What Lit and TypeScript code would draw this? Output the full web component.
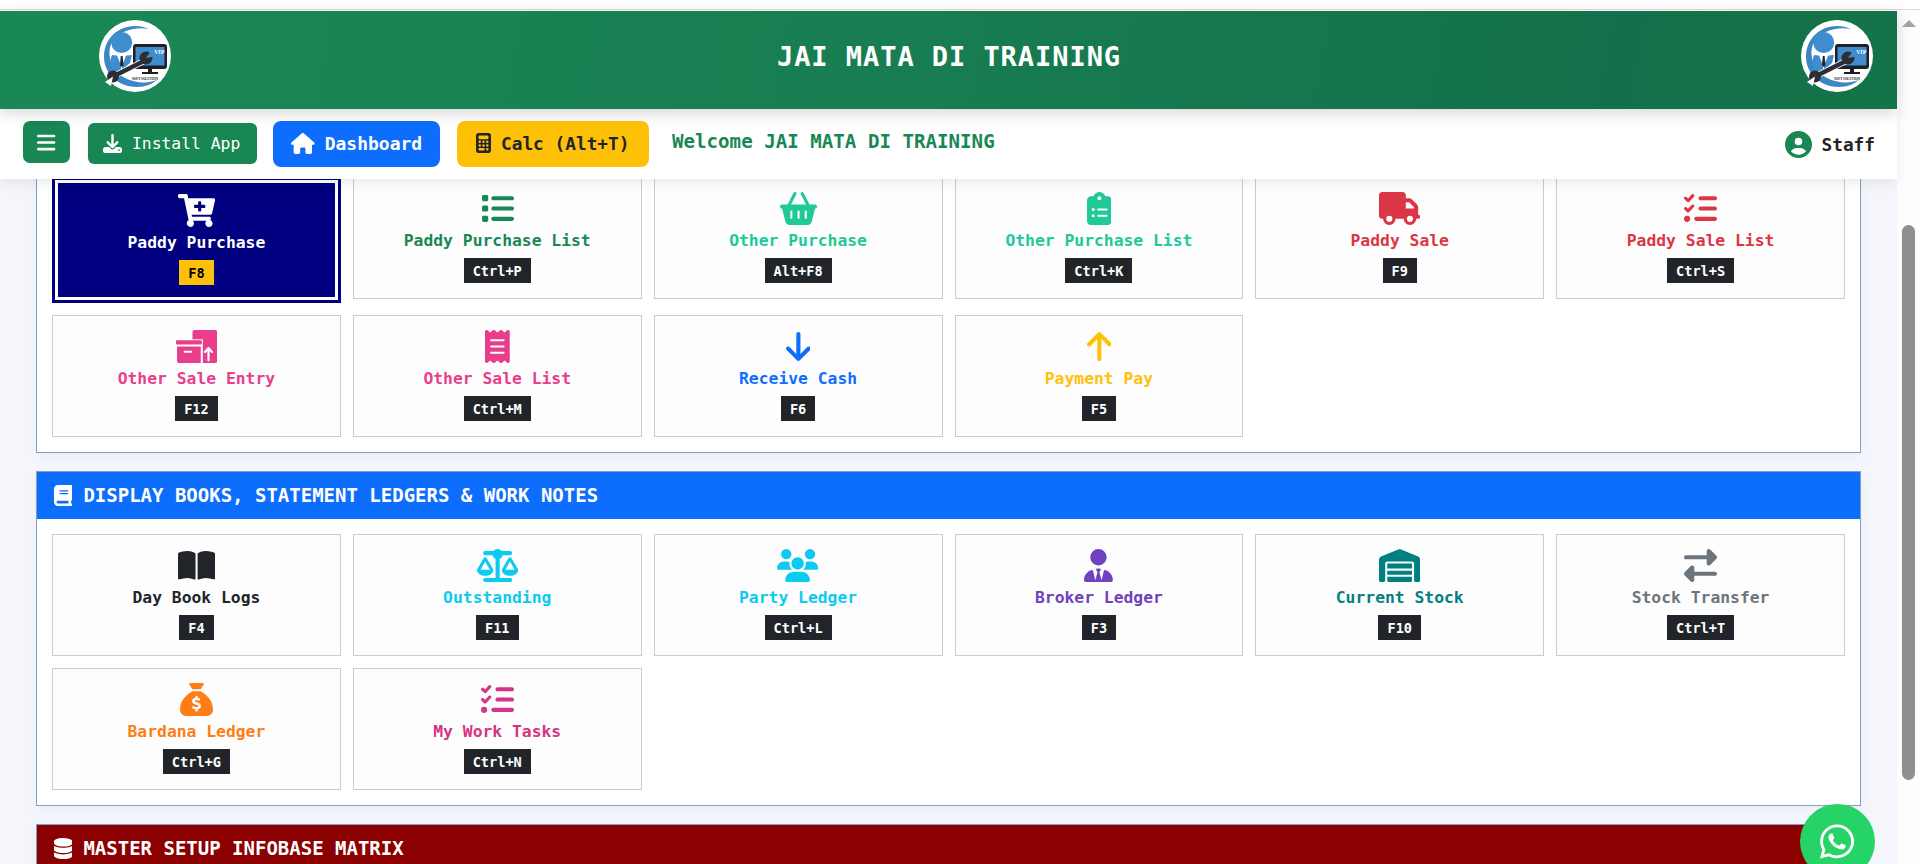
import { LitElement, html, css, svg } from "lit";
import { customElement } from "lit/decorators.js";

type Ic = { w: number; h?: number; d?: string; extra?: unknown };
const I: Record<string, Ic> = {
  bars: { w: 448, d: "M0 96C0 78.3 14.3 64 32 64H416c17.7 0 32 14.3 32 32s-14.3 32-32 32H32C14.3 128 0 113.7 0 96zM0 256c0-17.7 14.3-32 32-32H416c17.7 0 32 14.3 32 32s-14.3 32-32 32H32c-17.7 0-32-14.3-32-32zM448 416c0 17.7-14.3 32-32 32H32c-17.7 0-32-14.3-32-32s14.3-32 32-32H416c17.7 0 32 14.3 32 32z" },
  download: { w: 512, d: "M288 32c0-17.7-14.3-32-32-32s-32 14.3-32 32V274.7l-73.4-73.4c-12.5-12.5-32.8-12.5-45.3 0s-12.5 32.8 0 45.3l128 128c12.5 12.5 32.8 12.5 45.3 0l128-128c12.5-12.5 12.5-32.8 0-45.3s-32.8-12.5-45.3 0L288 274.7V32zM64 352c-35.3 0-64 28.7-64 64v32c0 35.3 28.7 64 64 64H448c35.3 0 64-28.7 64-64V416c0-35.3-28.7-64-64-64H346.5l-45.3 45.3c-25 25-65.5 25-90.5 0L165.5 352H64zm368 56a24 24 0 1 1 0 48 24 24 0 1 1 0-48z" },
  house: { w: 576, d: "M575.8 255.5c0 18-15 32.1-32 32.1h-32l.7 160.2c0 2.7-.2 5.4-.5 8.1V472c0 22.1-17.9 40-40 40H456c-1.1 0-2.2 0-3.3-.1c-1.4 .1-2.8 .1-4.2 .1H416 392c-22.1 0-40-17.9-40-40V448 384c0-17.7-14.3-32-32-32H256c-17.7 0-32 14.3-32 32v64 24c0 22.1-17.9 40-40 40H160 128.1c-1.5 0-3-.1-4.5-.2c-1.2 .1-2.4 .2-3.6 .2H104c-22.1 0-40-17.9-40-40V360c0-.9 0-1.9 .1-2.8V287.6H32c-18 0-32-14-32-32.1c0-9 3-17 10-24L266.4 8c7-7 15-8 22-8s15 2 21 7L564.8 231.5c8 7 12 15 11 24z" },
  calc: { w: 384, d: "M64 0C28.7 0 0 28.7 0 64V448c0 35.3 28.7 64 64 64H320c35.3 0 64-28.7 64-64V64c0-35.3-28.7-64-64-64H64zM96 64H288c17.7 0 32 14.3 32 32v32c0 17.7-14.3 32-32 32H96c-17.7 0-32-14.3-32-32V96c0-17.7 14.3-32 32-32zm32 160a32 32 0 1 1 -64 0 32 32 0 1 1 64 0zM96 352a32 32 0 1 1 0-64 32 32 0 1 1 0 64zM64 416c0-17.7 14.3-32 32-32h96c17.7 0 32 14.3 32 32s-14.3 32-32 32H96c-17.7 0-32-14.3-32-32zM192 256a32 32 0 1 1 0-64 32 32 0 1 1 0 64zm32 64a32 32 0 1 1 -64 0 32 32 0 1 1 64 0zm64-64a32 32 0 1 1 0-64 32 32 0 1 1 0 64zm32 64a32 32 0 1 1 -64 0 32 32 0 1 1 64 0zM288 448a32 32 0 1 1 0-64 32 32 0 1 1 0 64z" },
  user: { w: 512, d: "M399 384.2C376.9 345.8 335.4 320 288 320H224c-47.4 0-88.9 25.8-111 64.2c35.2 39.2 86.2 63.8 143 63.8s107.8-24.7 143-63.8zM0 256a256 256 0 1 1 512 0A256 256 0 1 1 0 256zm256 16a72 72 0 1 0 0-144 72 72 0 1 0 0 144z" },
  cart: { w: 576, d: "M504.717 320H211.572l6.545 32h268.418c15.401 0 26.816 14.301 23.403 29.319l-5.517 24.276C523.112 414.668 536 433.828 536 456c0 31.202-25.519 56.743-56.723 56-29.699-.697-54.158-24.994-54.98-54.692-.446-16.104 5.976-30.75 16.558-41.308H231.147c10.254 10.236 16.612 24.378 16.612 39.995 0 31.8-26.5 57.4-58.3 56-28.3-1.255-51.9-24.2-53.8-52.5-1.5-22.6 10.6-42.6 29.1-53.1L93.6 64H24C10.745 64 0 53.255 0 40V24C0 10.745 10.745 0 24 0h102.529c11.401 0 21.228 8.021 23.513 19.19L159.208 64H551.99c15.401 0 26.816 14.301 23.403 29.319l-47.273 208C525.637 312.246 515.923 320 504.717 320zM408 168h-48v-40c0-8.837-7.163-16-16-16h-16c-8.837 0-16 7.163-16 16v40h-48c-8.837 0-16 7.163-16 16v16c0 8.837 7.163 16 16 16h48v40c0 8.837 7.163 16 16 16h16c8.837 0 16-7.163 16-16v-40h48c8.837 0 16-7.163 16-16v-16c0-8.837-7.163-16-16-16z" },
  list: { w: 512, d: "M40 48C26.7 48 16 58.7 16 72v48c0 13.3 10.7 24 24 24H88c13.3 0 24-10.7 24-24V72c0-13.3-10.7-24-24-24H40zM192 64c-17.7 0-32 14.3-32 32s14.3 32 32 32H480c17.7 0 32-14.3 32-32s-14.3-32-32-32H192zm0 160c-17.7 0-32 14.3-32 32s14.3 32 32 32H480c17.7 0 32-14.3 32-32s-14.3-32-32-32H192zm0 160c-17.7 0-32 14.3-32 32s14.3 32 32 32H480c17.7 0 32-14.3 32-32s-14.3-32-32-32H192zM16 232v48c0 13.3 10.7 24 24 24H88c13.3 0 24-10.7 24-24V232c0-13.3-10.7-24-24-24H40c-13.3 0-24 10.7-24 24zM40 368c-13.3 0-24 10.7-24 24v48c0 13.3 10.7 24 24 24H88c13.3 0 24-10.7 24-24V392c0-13.3-10.7-24-24-24H40z" },
  basket: { w: 576, d: "M253.3 35.1c6.1-11.8 1.5-26.3-10.2-32.4s-26.3-1.5-32.4 10.2L117.6 192H32c-17.7 0-32 14.3-32 32s14.3 32 32 32L83.9 463.5C91 492 116.6 512 146 512H430c29.4 0 55-20 62.1-48.5L544 256c17.7 0 32-14.3 32-32s-14.3-32-32-32H458.4L365.3 12.9C359.2 1.2 344.7-3.4 332.9 2.7s-16.3 20.6-10.2 32.4L404.3 192H171.7L253.3 35.1zM192 304v96c0 8.8-7.2 16-16 16s-16-7.2-16-16V304c0-8.8 7.2-16 16-16s16 7.2 16 16zm96-16c8.8 0 16 7.2 16 16v96c0 8.8-7.2 16-16 16s-16-7.2-16-16V304c0-8.8 7.2-16 16-16zm128 16v96c0 8.8-7.2 16-16 16s-16-7.2-16-16V304c0-8.8 7.2-16 16-16s16 7.2 16 16z" },
  clip: { w: 384, d: "M192 0c-41.8 0-77.4 26.7-90.5 64H64C28.7 64 0 92.7 0 128V448c0 35.3 28.7 64 64 64H320c35.3 0 64-28.7 64-64V128c0-35.3-28.7-64-64-64H282.5C269.4 26.7 233.8 0 192 0zm0 64a32 32 0 1 1 0 64 32 32 0 1 1 0-64zM72 272a24 24 0 1 1 48 0 24 24 0 1 1 -48 0zm104-16H304c8.8 0 16 7.2 16 16s-7.2 16-16 16H176c-8.8 0-16-7.2-16-16s7.2-16 16-16zM72 368a24 24 0 1 1 48 0 24 24 0 1 1 -48 0zm88 0c0-8.8 7.2-16 16-16H304c8.8 0 16 7.2 16 16s-7.2 16-16 16H176c-8.8 0-16-7.2-16-16z" },
  truck: { w: 640, d: "M48 0C21.5 0 0 21.5 0 48V368c0 26.5 21.5 48 48 48H64c0 53 43 96 96 96s96-43 96-96H384c0 53 43 96 96 96s96-43 96-96h32c17.7 0 32-14.3 32-32s-14.3-32-32-32V288 256 237.3c0-17-6.7-33.3-18.7-45.3L512 114.7c-12-12-28.3-18.7-45.3-18.7H416V48c0-26.5-21.5-48-48-48H48zM416 160h50.7L544 237.3V256H416V160zM112 416a48 48 0 1 1 96 0 48 48 0 1 1 -96 0zm368-48a48 48 0 1 1 0 96 48 48 0 1 1 0-96z" },
  check: { w: 512, d: "M152.1 38.2c9.9 8.9 10.7 24 1.8 33.9l-72 80c-4.4 4.9-10.6 7.8-17.2 7.9s-12.9-2.4-17.6-7L7 113C-2.3 103.6-2.3 88.4 7 79s24.6-9.4 33.9 0l22.1 22.1 55.1-61.2c8.9-9.9 24-10.7 33.9-1.8zm0 160c9.9 8.9 10.7 24 1.8 33.9l-72 80c-4.4 4.9-10.6 7.8-17.2 7.9s-12.9-2.4-17.6-7L7 273c-9.4-9.4-9.4-24.6 0-33.9s24.6-9.4 33.9 0l22.1 22.1 55.1-61.2c8.9-9.9 24-10.7 33.9-1.8zM224 96c0-17.7 14.3-32 32-32H480c17.7 0 32 14.3 32 32s-14.3 32-32 32H256c-17.7 0-32-14.3-32-32zm0 160c0-17.7 14.3-32 32-32H480c17.7 0 32 14.3 32 32s-14.3 32-32 32H256c-17.7 0-32-14.3-32-32zM160 416c0-17.7 14.3-32 32-32H480c17.7 0 32 14.3 32 32s-14.3 32-32 32H192c-17.7 0-32-14.3-32-32zM48 368a48 48 0 1 1 0 96 48 48 0 1 1 0-96z" },
  boxup: {
    w: 640,
    extra: svg`<rect x="256" y="0" width="384" height="512" rx="32" fill="currentColor"/>
      <rect x="-16" y="144" width="432" height="368" fill="#fdfdfd"/>
      <rect x="0" y="160" width="400" height="64" rx="16" fill="currentColor"/>
      <path d="M16 256H384V512H48C30 512 16 498 16 480Z" fill="currentColor"/>
      <rect x="120" y="320" width="130" height="34" rx="6" fill="#fdfdfd"/>
      <path d="M504 470V280M450 340L504 280L558 340" fill="none" stroke="#fdfdfd" stroke-width="34" stroke-linecap="round" stroke-linejoin="round"/>`,
  },
  receipt: { w: 384, d: "M14 2.2C22.5-1.7 32.5-.3 39.6 5.8L80 40.4 120.4 5.8c9-7.7 22.3-7.7 31.2 0L192 40.4 232.4 5.8c9-7.7 22.3-7.7 31.2 0L304 40.4 344.4 5.8c7.1-6.1 17.1-7.5 25.6-3.6s14 12.4 14 21.8V488c0 9.4-5.5 17.9-14 21.8s-18.5 2.5-25.6-3.6L304 471.6l-40.4 34.6c-9 7.7-22.3 7.7-31.2 0L192 471.6l-40.4 34.6c-9 7.7-22.3 7.7-31.2 0L80 471.6 39.6 506.2c-7.1 6.1-17.1 7.5-25.6 3.6S0 497.4 0 488V24C0 14.6 5.5 6.1 14 2.2zM96 144c-8.8 0-16 7.2-16 16s7.2 16 16 16H288c8.8 0 16-7.2 16-16s-7.2-16-16-16H96zM80 352c0 8.8 7.2 16 16 16H288c8.8 0 16-7.2 16-16s-7.2-16-16-16H96c-8.8 0-16 7.2-16 16zM96 240c-8.8 0-16 7.2-16 16s7.2 16 16 16H288c8.8 0 16-7.2 16-16s-7.2-16-16-16H96z" },
  down: { w: 384, d: "M169.4 470.6c12.5 12.5 32.8 12.5 45.3 0l160-160c12.5-12.5 12.5-32.8 0-45.3s-32.8-12.5-45.3 0L224 370.8 224 64c0-17.7-14.3-32-32-32s-32 14.3-32 32l0 306.7L54.6 265.4c-12.5-12.5-32.8-12.5-45.3 0s-12.5 32.8 0 45.3l160 160z" },
  up: { w: 384, d: "M214.6 41.4c-12.5-12.5-32.8-12.5-45.3 0l-160 160c-12.5 12.5-12.5 32.8 0 45.3s32.8 12.5 45.3 0L160 141.2V448c0 17.7 14.3 32 32 32s32-14.3 32-32V141.2L329.4 246.6c12.5 12.5 32.8 12.5 45.3 0s12.5-32.8 0-45.3l-160-160z" },
  bookopen: { w: 576, d: "M249.6 471.5c10.8 3.8 22.4-4.1 22.4-15.5V78.6c0-4.2-1.6-8.4-5-11C247.4 52 202.4 32 144 32C93.5 32 46.3 45.3 18.1 56.1C6.8 60.5 0 71.7 0 83.8V454.1c0 11.9 12.8 20.2 24.1 16.5C55.6 460.1 105.5 448 144 448c33.9 0 79 14 105.6 23.5zm76.8 0C353 462 398.1 448 432 448c38.5 0 88.4 12.1 119.9 22.6c11.3 3.8 24.1-4.6 24.1-16.5V83.8c0-12.1-6.8-23.3-18.1-27.6C529.7 45.3 482.5 32 432 32c-58.4 0-103.4 20-123 35.6c-3.3 2.6-5 6.8-5 11V456c0 11.4 11.7 19.3 22.4 15.5z" },
  scale: { w: 640, d: "M384 32H512c17.7 0 32 14.3 32 32s-14.3 32-32 32H398.4c-5.2 25.8-22.9 47.1-46.4 57.3V448H512c17.7 0 32 14.3 32 32s-14.3 32-32 32H320 128c-17.7 0-32-14.3-32-32s14.3-32 32-32H288V153.3c-23.5-10.3-41.2-31.6-46.4-57.3H128c-17.7 0-32-14.3-32-32s14.3-32 32-32H256c14.6-19.4 37.8-32 64-32s49.4 12.6 64 32zm55.6 288H584.4L512 195.8 439.6 320zM512 416c-62.9 0-115.2-34-126-78.9c-2.6-11 1-22.3 6.7-32.1l95.2-163.2c5-8.6 14.2-13.8 24.1-13.8s19.1 5.3 24.1 13.8l95.2 163.2c5.7 9.8 9.3 21.1 6.7 32.1C627.2 382 574.9 416 512 416zM126.8 195.8L54.4 320H199.3L126.8 195.8zM.9 337.1c-2.6-11 1-22.3 6.7-32.1l95.2-163.2c5-8.6 14.2-13.8 24.1-13.8s19.1 5.3 24.1 13.8l95.2 163.2c5.7 9.8 9.3 21.1 6.7 32.1C242 382 189.7 416 126.8 416S11.7 382 .9 337.1z" },
  users: { w: 640, d: "M144 0a80 80 0 1 1 0 160A80 80 0 1 1 144 0zM512 0a80 80 0 1 1 0 160A80 80 0 1 1 512 0zM0 298.7C0 239.8 47.8 192 106.7 192h42.7c15.9 0 31 3.5 44.6 9.7c-1.3 7.2-1.9 14.7-1.9 22.3c0 38.2 16.8 72.5 43.3 96c-.2 0-.4 0-.7 0H21.3C9.6 320 0 310.4 0 298.7zM405.3 320c-.2 0-.4 0-.7 0c26.6-23.5 43.3-57.8 43.3-96c0-7.6-.7-15-1.9-22.3c13.6-6.3 28.7-9.7 44.6-9.7h42.7C592.2 192 640 239.8 640 298.7c0 11.8-9.6 21.3-21.3 21.3H405.3zM224 224a96 96 0 1 1 192 0 96 96 0 1 1 -192 0zM128 485.3C128 411.7 187.7 352 261.3 352H378.7C452.3 352 512 411.7 512 485.3c0 14.7-11.9 26.7-26.7 26.7H154.7c-14.7 0-26.7-11.9-26.7-26.7z" },
  tie: { w: 448, d: "M96 128a128 128 0 1 0 256 0A128 128 0 1 0 96 128zm94.5 200.2l18.6 31L175.8 483.1l-36-146.9c-2-8.1-9.8-13.4-17.9-11.3C51.9 342.4 0 405.8 0 481.3c0 17 13.8 30.7 30.7 30.7H162.5c0 0 0 0 .1 0H168 280h5.5c0 0 0 0 .1 0H417.3c17 0 30.7-13.8 30.7-30.7c0-75.5-51.9-138.9-121.9-156.4c-8.1-2-15.9 3.3-17.9 11.3l-36 146.9L238.9 359.2l18.6-31c6.4-10.7-1.3-24.2-13.7-24.2H224 204.3c-12.4 0-20.1 13.6-13.7 24.2z" },
  warehouse: { w: 640, d: "M0 488V171.3c0-26.2 15.9-49.7 40.2-59.4L308.1 4.8c7.6-3.1 16.1-3.1 23.8 0L599.8 111.9c24.3 9.7 40.2 33.3 40.2 59.4V488c0 13.3-10.7 24-24 24H568c-13.3 0-24-10.7-24-24V224c0-17.7-14.3-32-32-32H128c-17.7 0-32 14.3-32 32V488c0 13.3-10.7 24-24 24H24c-13.3 0-24-10.7-24-24zm488 24l-336 0c-13.3 0-24-10.7-24-24V432H512l0 56c0 13.3-10.7 24-24 24zM128 400V336H512v64H128zm0-96V224H512l0 80H128z" },
  exchange: { w: 512, d: "M32 96l320 0V32c0-12.9 7.8-24.6 19.8-29.6s25.7-2.2 34.9 6.9l96 96c6 6 9.4 14.1 9.4 22.6s-3.4 16.6-9.4 22.6l-96 96c-9.2 9.2-22.9 11.9-34.9 6.9s-19.8-16.6-19.8-29.6V160L32 160c-17.7 0-32-14.3-32-32s14.3-32 32-32zM480 352c17.7 0 32 14.3 32 32s-14.3 32-32 32H160v64c0 12.9-7.8 24.6-19.8 29.6s-25.7 2.2-34.9-6.9l-96-96c-6-6-9.4-14.1-9.4-22.6s3.4-16.6 9.4-22.6l96-96c9.2-9.2 22.9-11.9 34.9-6.9s19.8 16.6 19.8 29.6l0 64H480z" },
  sack: { w: 512, d: "M320 96H192L144.6 24.9C137.5 14.2 145.1 0 157.9 0H354.1c12.8 0 20.4 14.2 13.3 24.9L320 96zM192 128H320c3.8 2.5 8.1 5.3 13 8.4C389.7 172.7 512 250.9 512 416c0 53-43 96-96 96H96c-53 0-96-43-96-96C0 250.9 122.3 172.7 179 136.4l0 0 0 0c4.8-3.1 9.2-5.9 13-8.4zm84 88c0-11-9-20-20-20s-20 9-20 20v14c-7.6 1.7-15.2 4.4-22.2 8.5c-13.9 8.3-25.9 22.8-25.8 43.9c.1 20.3 12 33.1 24.7 40.7c11 6.6 24.7 10.8 35.6 14l1.7 .5c12.6 3.8 21.8 6.8 28 10.7c5.1 3.2 5.8 5.4 5.9 8.2c.1 5-1.8 8-5.9 10.5c-5 3.1-12.9 5-21.4 4.7c-11.1-.4-21.5-3.9-35.1-8.5c-2.3-.8-4.7-1.6-7.2-2.4c-10.5-3.5-21.8 2.2-25.3 12.6s2.2 21.8 12.6 25.3c1.9 .6 4 1.3 6.1 2.1l0 0 0 0c8.3 2.9 17.9 6.2 28.2 8.4V424c0 11 9 20 20 20s20-9 20-20V410.2c8-1.7 16-4.5 23.2-9c14.3-8.9 25.1-24.1 24.8-45c-.3-20.3-11.7-33.4-24.6-41.6c-11.5-7.2-25.9-11.6-37.1-15l0 0-.7-.2c-12.8-3.9-21.9-6.7-28.3-10.5c-5.2-3.1-5.3-4.9-5.3-6.7c0-3.7 1.4-6.5 6.2-9.3c5.4-3.2 13.6-5.1 21.5-5c9.6 .1 20.2 2.2 31.2 5.2c10.7 2.8 21.6-3.5 24.5-14.2s-3.5-21.6-14.2-24.5c-6.5-1.7-13.7-3.4-21.1-4.7V216z" },
  book: { w: 448, d: "M96 0C43 0 0 43 0 96V416c0 53 43 96 96 96H384h32c17.7 0 32-14.3 32-32s-14.3-32-32-32V384c17.7 0 32-14.3 32-32V32c0-17.7-14.3-32-32-32H384 96zm0 384H352v64H96c-17.7 0-32-14.3-32-32s14.3-32 32-32zm32-240c0-8.8 7.2-16 16-16H336c8.8 0 16 7.2 16 16s-7.2 16-16 16H144c-8.8 0-16-7.2-16-16zm16 48H336c8.8 0 16 7.2 16 16s-7.2 16-16 16H144c-8.8 0-16-7.2-16-16s7.2-16 16-16z" },
  db: { w: 448, d: "M448 80v48c0 44.2-100.3 80-224 80S0 172.2 0 128V80C0 35.8 100.3 0 224 0S448 35.8 448 80zM393.2 214.7c20.8-7.4 39.9-16.9 54.8-28.6V288c0 44.2-100.3 80-224 80S0 332.2 0 288V186.1c14.9 11.8 34 21.2 54.8 28.6C99.7 230.7 159.5 240 224 240s124.3-9.3 169.2-25.3zM0 346.1c14.9 11.8 34 21.2 54.8 28.6C99.7 390.7 159.5 400 224 400s124.3-9.3 169.2-25.3c20.8-7.4 39.9-16.9 54.8-28.6V432c0 44.2-100.3 80-224 80S0 476.2 0 432V346.1z" },
  wa: { w: 448, d: "M380.9 97.1C339 55.1 283.2 32 223.9 32c-122.4 0-222 99.6-222 222 0 39.1 10.2 77.3 29.6 111L0 480l117.7-30.9c32.4 17.7 68.9 27 106.1 27h.1c122.3 0 224.1-99.6 224.1-222 0-59.3-25.2-115-67.1-157zm-157 341.6c-33.2 0-65.7-8.9-94-25.7l-6.7-4-69.8 18.3L72 359.2l-4.4-7c-18.5-29.4-28.2-63.3-28.2-98.2 0-101.7 82.8-184.5 184.6-184.5 49.3 0 95.6 19.2 130.4 54.1 34.8 34.9 56.2 81.2 56.1 130.5 0 101.8-84.9 184.6-186.6 184.6zm101.2-138.2c-5.5-2.8-32.8-16.2-37.9-18-5.1-1.9-8.8-2.8-12.5 2.8-3.7 5.6-14.3 18-17.6 21.8-3.2 3.7-6.5 4.2-12 1.4-32.6-16.3-54-29.1-75.5-66-5.7-9.8 5.7-9.1 16.3-30.3 1.8-3.7.9-6.9-.5-9.7-1.4-2.8-12.5-30.1-17.1-41.2-4.5-10.8-9.1-9.3-12.5-9.5-3.2-.2-6.9-.2-10.6-.2-3.7 0-9.7 1.4-14.8 6.9-5.1 5.6-19.4 19-19.4 46.3 0 27.3 19.9 53.7 22.6 57.4 2.8 3.7 39.1 59.7 94.8 83.8 35.2 15.2 49 16.5 66.6 13.9 10.7-1.6 32.8-13.4 37.4-26.4 4.6-13 4.6-24.1 3.2-26.4-1.3-2.5-5-3.9-10.5-6.6z" },
};

const icon = (name: string) => {
  const i = I[name];
  return html`<svg class="ic" viewBox="0 0 ${i.w} 512" fill="currentColor">
    ${i.d ? svg`<path d=${i.d}></path>` : i.extra}
  </svg>`;
};

const logo = () => html`<svg class="logo" viewBox="0 0 72 72">
  <circle cx="36" cy="36" r="36" fill="#fff"></circle>
  <path d="M50 9C30 0 5 12 5 37C5 54 20 67 38 67C47 67 53 64 58 60C48 64 36 63 26 58C12 50 7 34 13 22C20 11 36 6 50 9Z" fill="#3d86c6"></path>
  <path d="M13 35C10 42 12 50 17 55L22 51L22 36Z" fill="#3f8ccf"></path>
  <path d="M33 35L23 36L23 50L31 43Z" fill="#3f8ccf"></path>
  <circle cx="22.700" cy="22.500" r="10.500" fill="#3f8ccf"></circle>
  <path d="M17 33L22.700 47L28 33L22.700 36Z" fill="#fff"></path>
  <path d="M21.800 36H23.600L24.500 45L22.700 47L21 45Z" fill="#222"></path>
  <rect x="34" y="24" width="34" height="25" rx="3" fill="#1d1f24"></rect>
  <rect x="36.500" y="27" width="29" height="18.500" fill="#3f8ccf"></rect>
  <path d="M49 49H53V52H59V54H43V52H49Z" fill="#1d1f24"></path>
  <text x="55" y="34" class="vip">VIP</text>
  <path d="M15 56L45 41" stroke="#fff" stroke-width="6"></path>
  <path d="M15 56L45 41" stroke="#2c2e33" stroke-width="4.500"></path>
  <circle cx="47" cy="38" r="6.500" fill="#2c2e33"></circle>
  <path d="M47 38L54 28L58 36Z" fill="#3f8ccf"></path>
  <circle cx="14" cy="56.500" r="6" fill="#2c2e33"></circle>
  <path d="M14 56.500L6 62L12 66Z" fill="#fff"></path>
  <text x="46" y="59.500" text-anchor="middle" class="soft">SOFT SOLUTION</text>
</svg>`;

type Card = { ic: string; label: string; key: string; color: string; active?: boolean };

const S1: Card[] = [
  { ic: "cart", label: "Paddy Purchase", key: "F8", color: "#fff", active: true },
  { ic: "list", label: "Paddy Purchase List", key: "Ctrl+P", color: "#198754" },
  { ic: "basket", label: "Other Purchase", key: "Alt+F8", color: "#20c997" },
  { ic: "clip", label: "Other Purchase List", key: "Ctrl+K", color: "#20c997" },
  { ic: "truck", label: "Paddy Sale", key: "F9", color: "#dc3545" },
  { ic: "check", label: "Paddy Sale List", key: "Ctrl+S", color: "#dc3545" },
  { ic: "boxup", label: "Other Sale Entry", key: "F12", color: "#e83e8c" },
  { ic: "receipt", label: "Other Sale List", key: "Ctrl+M", color: "#e83e8c" },
  { ic: "down", label: "Receive Cash", key: "F6", color: "#0d6efd" },
  { ic: "up", label: "Payment Pay", key: "F5", color: "#ffc107" },
];
const S2: Card[] = [
  { ic: "bookopen", label: "Day Book Logs", key: "F4", color: "#212529" },
  { ic: "scale", label: "Outstanding", key: "F11", color: "#0dcaf0" },
  { ic: "users", label: "Party Ledger", key: "Ctrl+L", color: "#0dcaf0" },
  { ic: "tie", label: "Broker Ledger", key: "F3", color: "#6f42c1" },
  { ic: "warehouse", label: "Current Stock", key: "F10", color: "#008080" },
  { ic: "exchange", label: "Stock Transfer", key: "Ctrl+T", color: "#6c757d" },
  { ic: "sack", label: "Bardana Ledger", key: "Ctrl+G", color: "#fd7e14" },
  { ic: "check", label: "My Work Tasks", key: "Ctrl+N", color: "#d63384" },
];

@customElement("app-root")
export class AppRoot extends LitElement {
  static styles = css`
    :host {
      display: flex;
      flex-direction: column;
      height: 864px;
      overflow: hidden;
      background: #fff;
      font-family: "DejaVu Sans Mono", monospace;
      font-weight: 700;
    }
    * { box-sizing: border-box; }
    .ic { height: 100%; display: block; width: auto; }
    .strip { height: 10px; flex: none; border-bottom: 1px solid #dcdcdc; margin-bottom: 1px; }
    .frame { flex: 1; min-height: 0; display: flex; }
    .main { flex: 1; min-width: 0; display: flex; flex-direction: column; background: #f4f6fb; position: relative; }
    .sb { width: 23px; flex: none; background: #fdfdfd; display: flex; flex-direction: column; align-items: center; padding-top: 9px; }
    .sb-up { width: 0; height: 0; border-left: 7px solid transparent; border-right: 7px solid transparent; border-bottom: 7px solid #a3a3a3; }
    .sb-thumb { width: 13px; height: 555px; margin-top: 198px; border-radius: 7px; background: #8f8f8f; }

    header {
      height: 98px; flex: none; display: grid; grid-template-columns: 1fr auto 1fr; align-items: center;
      padding: 0 24px 8px 99px;
      background: linear-gradient(100deg, #1a8856 0%, #187e51 45%, #14704a 85%, #157349 100%);
      box-shadow: 0 4px 14px rgba(0,0,0,.16);
      position: relative; z-index: 3;
    }
    header .logo:last-child { justify-self: end; }
    .logo { width: 72px; height: 72px; display: block; }
    .vip { font: 700 6px "Liberation Serif", serif; fill: #fff; }
    .soft { font: 700 3.2px "Liberation Serif", serif; fill: #111; }
    h1 { margin: 0; color: #fff; font-size: 27px; letter-spacing: .95px; font-weight: 700; transform: translateX(-37px); }

    nav {
      height: 70px; flex: none; display: flex; align-items: center; padding: 0 22px 0 23px;
      background: #fff; box-shadow: 0 4px 12px rgba(0,0,0,.08);
      position: relative; z-index: 2;
    }
    .btn { display: flex; align-items: center; color: #fff; border-radius: 8px; }
    .menu { width: 47px; height: 42px; background: #198754; justify-content: center; margin-bottom: 4px; border-radius: 7px; }
    .menu span { height: 21px; }
    .inst { width: 169px; height: 41px; margin-left: 18px; margin-bottom: 1px; background: #198754; font-weight: 400; font-size: 16.35px; padding-left: 15px; gap: 10px; border-radius: 6px; }
    .inst span { height: 19px; }
    .dash { width: 167px; height: 46px; margin-left: 16px; background: #0d6efd; font-size: 18px; padding: 0 0 2px 18px; gap: 10px; }
    .dash span { height: 21px; }
    .calc { width: 192px; height: 46px; margin-left: 17px; background: #ffc107; color: #212529; font-size: 17.8px; padding: 0 0 2px 19px; gap: 10px; }
    .calc span { height: 20px; }
    .wel { margin-left: 23px; color: #198754; font-size: 19.15px; margin-bottom: 5px; }
    .staff { margin-left: auto; display: flex; align-items: center; gap: 9px; color: #212529; font-size: 17.8px; }
    .staff .u { height: 27px; color: #198754; }

    .scroll { flex: 1; min-height: 0; overflow: hidden; padding: 0 36px; }
    section { background: #fff; border: 1px solid #7f9fc4; box-shadow: 0 4px 12px rgba(0,0,0,.04); margin-bottom: 18px; }
    section.first { margin-top: -3px; border-top: 0; }
    .hd { height: 47px; display: flex; align-items: center; gap: 11px; padding: 0 0 1px 17px; color: #fff; font-size: 19px; }
    .hd span { height: 21px; }
    .blue { background: #0d6efd; }
    .red { background: #8b0000; }
    .grid { display: grid; grid-template-columns: repeat(6, 1fr); gap: 12px; padding: 15px; align-items: start; }
    .first .grid { padding-top: 1px; }
    .card { border: 1px solid #ccc; background: #fdfdfd; padding: 14px 4px 15px; display: flex; flex-direction: column; align-items: center; font-size: 16.35px; }
    .card .i { height: 33px; }
    .card .l { line-height: 24px; margin-top: 4px; }
    .card .k { margin-top: 5px; height: 25px; padding: 0 9px; background: #212529; color: #fff; font-size: 13.6px; display: flex; align-items: center; }
    .card.on { background: #000080; border: 3px solid #000080; box-shadow: inset 0 0 0 3px #fff; }
    .card.on .k { background: #ffc107; color: #000; }
    .wa { position: absolute; left: 1800px; top: 793px; width: 75px; height: 75px; border-radius: 50%; background: #25d366; color: #fff; display: flex; align-items: center; justify-content: center; z-index: 5; }
    .wa span { height: 39px; }
  `;

  private card(c: Card) {
    return html`<div class="card ${c.active ? "on" : ""}" style="color:${c.color}">
      <span class="i">${icon(c.ic)}</span>
      <span class="l">${c.label}</span>
      <span class="k">${c.key}</span>
    </div>`;
  }

  render() {
    return html`
      <div class="strip"></div>
      <div class="frame">
        <div class="main">
          <header>${logo()}<h1>JAI MATA DI TRAINING</h1>${logo()}</header>
          <nav>
            <div class="btn menu"><span>${icon("bars")}</span></div>
            <div class="btn inst"><span>${icon("download")}</span>Install App</div>
            <div class="btn dash"><span>${icon("house")}</span>Dashboard</div>
            <div class="btn calc"><span>${icon("calc")}</span>Calc (Alt+T)</div>
            <div class="wel">Welcome JAI MATA DI TRAINING</div>
            <div class="staff"><span class="u">${icon("user")}</span>Staff</div>
          </nav>
          <div class="scroll">
            <section class="first"><div class="grid">${S1.map((c) => this.card(c))}</div></section>
            <section>
              <div class="hd blue"><span>${icon("book")}</span>DISPLAY BOOKS, STATEMENT LEDGERS &amp; WORK NOTES</div>
              <div class="grid">${S2.map((c) => this.card(c))}</div>
            </section>
            <section>
              <div class="hd red"><span>${icon("db")}</span>MASTER SETUP INFOBASE MATRIX</div>
            </section>
          </div>
          <div class="wa"><span>${icon("wa")}</span></div>
        </div>
        <div class="sb"><div class="sb-up"></div><div class="sb-thumb"></div></div>
      </div>
    `;
  }
}
